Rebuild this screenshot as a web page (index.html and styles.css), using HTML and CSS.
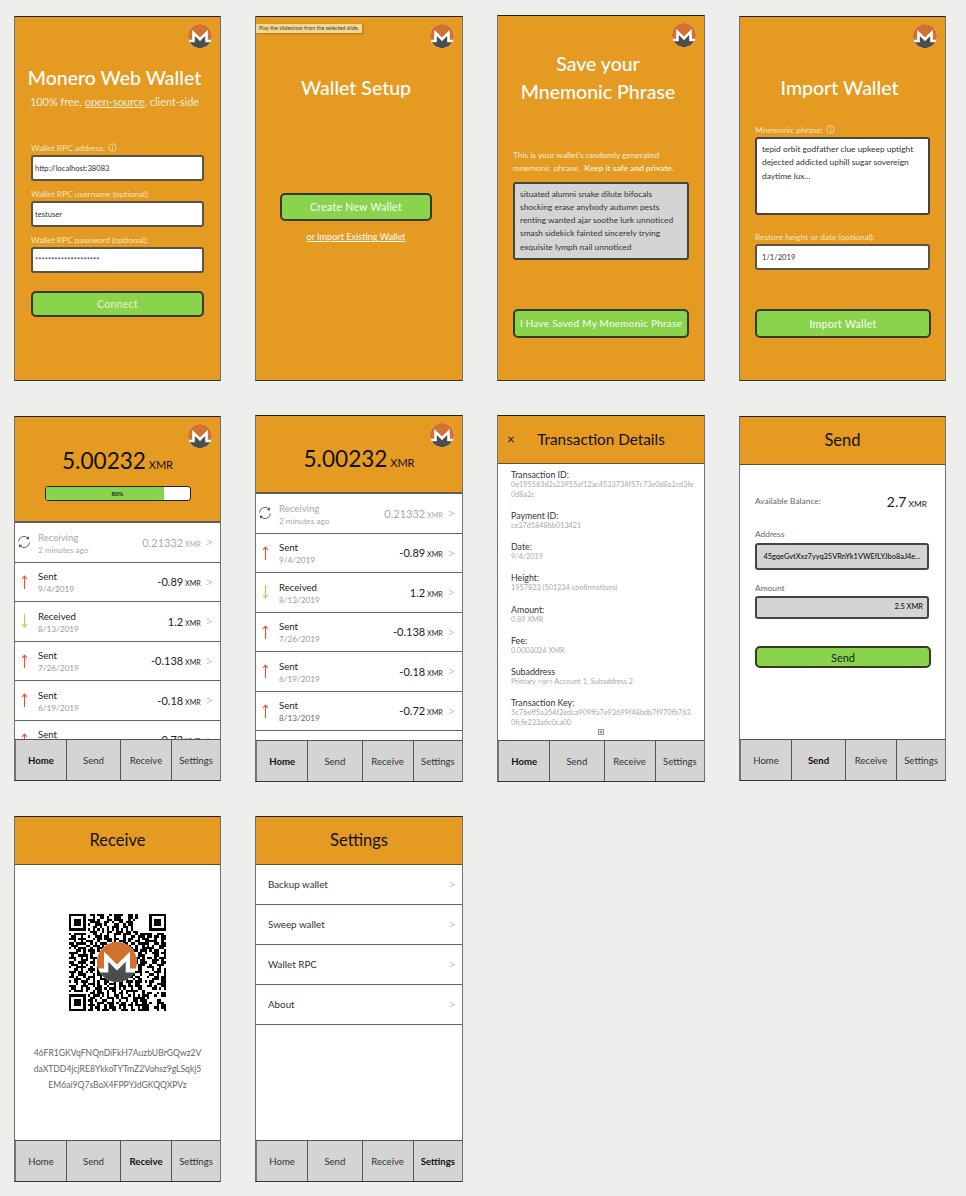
FILE: index.html
```html
<!DOCTYPE html>
<html lang="en">
<head>
  <meta charset="UTF-8">
  <title>Monero Web Wallet</title>
  <link rel="stylesheet" href="styles.css">
</head>
<body>
  <svg class="defs">
    <symbol id="logo" viewBox="0 0 24 24">
      <circle cx="12" cy="12" r="12" fill="#fff"/>
      <path fill="#d2702d" d="M12 0C5.365 0 0 5.373 0 12.015c0 1.335.228 2.607.618 3.81h3.577V5.729L12 13.545l7.805-7.815v10.095h3.577c.39-1.203.618-2.475.618-3.81C24 5.375 18.635 0 12 0z"/>
      <path fill="#4d4d4d" d="M10.212 15.307l-3.417-3.421v6.351H1.758C3.87 21.689 7.678 24 12 24s8.162-2.311 10.245-5.764h-5.04v-6.351l-3.386 3.421L12 17.135z"/>
    </symbol>
    <symbol id="up" viewBox="0 0 7 14">
      <path fill="none" stroke="#e8502f" stroke-width="1.1" d="M3.5 14V1M1.2 3.8L3.5 1L5.8 3.8"/>
    </symbol>
    <symbol id="down" viewBox="0 0 7 14">
      <path fill="none" stroke="#8fe04c" stroke-width="1.1" d="M3.5 0V13M1.2 10.2L3.5 13L5.8 10.2"/>
    </symbol>
    <symbol id="sync" viewBox="0 0 14 14">
      <path fill="none" stroke="#555" stroke-width=".9" d="M1.5 6.5A5.6 5.6 0 0 1 11 3M12.5 7.5A5.6 5.6 0 0 1 3 11"/>
      <path fill="#555" d="M11.9 1.2L12 4.4L8.9 3.9zM2.1 12.8L2 9.6L5.1 10.1z"/>
    </symbol>
    <symbol id="info" viewBox="0 0 10 10">
      <circle cx="5" cy="5" r="4.2" fill="none" stroke="currentColor" stroke-width=".8"/>
      <path fill="none" stroke="currentColor" stroke-width=".9" d="M5 4.2V7.6M5 2.4V3.3"/>
    </symbol>
  </svg>

  <div class="board">

    <!-- connect -->
    <section class="screen orange">
      <svg class="logo"><use href="#logo"/></svg>
      <h1 class="title connect-title">Monero Web Wallet</h1>
      <p class="subtitle">100% free, <u>open-source</u>, client-side</p>
      <div class="form connect-form">
        <label class="label">Wallet RPC address: <svg class="info"><use href="#info"/></svg></label>
        <div class="field">http://localhost:38083</div>
        <label class="label">Wallet RPC username (optional):</label>
        <div class="field">testuser</div>
        <label class="label">Wallet RPC password (optional):</label>
        <div class="field">********************</div>
        <button class="btn connect-btn">Connect</button>
      </div>
    </section>

    <!-- setup -->
    <section class="screen orange">
      <div class="tooltip">Play the slideshow from the selected slide.</div>
      <svg class="logo"><use href="#logo"/></svg>
      <h1 class="title setup-title">Wallet Setup</h1>
      <button class="btn create-btn">Create New Wallet</button>
      <a class="import-link">or Import Existing Wallet</a>
    </section>

    <!-- save mnemonic -->
    <section class="screen orange nudge">
      <svg class="logo"><use href="#logo"/></svg>
      <h1 class="title save-title">Save your<br>Mnemonic Phrase</h1>
      <div class="form save-form">
        <p class="note">This is your wallet's randomly generated<br>mnemonic phrase. &nbsp;<b>Keep it safe and private.</b></p>
        <div class="phrase phrase-gray">situated alumni snake dilute bifocals<br>shocking erase anybody autumn pests<br>renting wanted ajar soothe lurk unnoticed<br>smash sidekick fainted sincerely trying<br>exquisite lymph nail unnoticed</div>
        <button class="btn saved-btn">I Have Saved My Mnemonic Phrase</button>
      </div>
    </section>

    <!-- import -->
    <section class="screen orange">
      <svg class="logo"><use href="#logo"/></svg>
      <h1 class="title setup-title">Import Wallet</h1>
      <div class="form import-form">
        <label class="label">Mnemonic phrase: <svg class="info"><use href="#info"/></svg></label>
        <div class="phrase phrase-white">tepid orbit godfather clue upkeep uptight<br>dejected addicted uphill sugar sovereign<br>daytime lux...</div>
        <label class="label restore-label">Restore height or date (optional):</label>
        <div class="field">1/1/2019</div>
        <button class="btn import-btn">Import Wallet</button>
      </div>
    </section>

    <!-- home, syncing -->
    <section class="screen">
      <header class="head head-sync">
        <svg class="logo"><use href="#logo"/></svg>
        <div class="balance">5.00232<span class="unit"> XMR</span></div>
        <div class="progress"><div class="progress-fill"></div><span class="progress-text">80%</span></div>
      </header>
      <div class="txs">
        <div class="tx tx-pending"><svg class="tx-icon sync"><use href="#sync"/></svg><div class="tx-main"><div class="tx-name">Receiving</div><div class="tx-date">2 minutes ago</div></div><div class="tx-amount">0.21332<span class="tx-unit"> XMR</span></div><span class="chev">&gt;</span></div>
        <div class="tx"><svg class="tx-icon"><use href="#up"/></svg><div class="tx-main"><div class="tx-name">Sent</div><div class="tx-date">9/4/2019</div></div><div class="tx-amount">-0.89<span class="tx-unit"> XMR</span></div><span class="chev">&gt;</span></div>
        <div class="tx"><svg class="tx-icon"><use href="#down"/></svg><div class="tx-main"><div class="tx-name">Received</div><div class="tx-date">8/13/2019</div></div><div class="tx-amount">1.2<span class="tx-unit"> XMR</span></div><span class="chev">&gt;</span></div>
        <div class="tx"><svg class="tx-icon"><use href="#up"/></svg><div class="tx-main"><div class="tx-name">Sent</div><div class="tx-date">7/26/2019</div></div><div class="tx-amount">-0.138<span class="tx-unit"> XMR</span></div><span class="chev">&gt;</span></div>
        <div class="tx"><svg class="tx-icon"><use href="#up"/></svg><div class="tx-main"><div class="tx-name">Sent</div><div class="tx-date">6/19/2019</div></div><div class="tx-amount">-0.18<span class="tx-unit"> XMR</span></div><span class="chev">&gt;</span></div>
        <div class="tx"><svg class="tx-icon"><use href="#up"/></svg><div class="tx-main"><div class="tx-name">Sent</div><div class="tx-date">8/13/2019</div></div><div class="tx-amount">-0.72<span class="tx-unit"> XMR</span></div><span class="chev">&gt;</span></div>
      </div>
      <nav class="tabs"><a class="tab tab-on">Home</a><a class="tab">Send</a><a class="tab">Receive</a><a class="tab">Settings</a></nav>
    </section>

    <!-- home, synced -->
    <section class="screen nudge nudge-both">
      <header class="head head-home">
        <svg class="logo"><use href="#logo"/></svg>
        <div class="balance">5.00232<span class="unit"> XMR</span></div>
      </header>
      <div class="txs">
        <div class="tx tx-pending"><svg class="tx-icon sync"><use href="#sync"/></svg><div class="tx-main"><div class="tx-name">Receiving</div><div class="tx-date">2 minutes ago</div></div><div class="tx-amount">0.21332<span class="tx-unit"> XMR</span></div><span class="chev">&gt;</span></div>
        <div class="tx"><svg class="tx-icon"><use href="#up"/></svg><div class="tx-main"><div class="tx-name">Sent</div><div class="tx-date">9/4/2019</div></div><div class="tx-amount">-0.89<span class="tx-unit"> XMR</span></div><span class="chev">&gt;</span></div>
        <div class="tx"><svg class="tx-icon"><use href="#down"/></svg><div class="tx-main"><div class="tx-name">Received</div><div class="tx-date">8/13/2019</div></div><div class="tx-amount">1.2<span class="tx-unit"> XMR</span></div><span class="chev">&gt;</span></div>
        <div class="tx"><svg class="tx-icon"><use href="#up"/></svg><div class="tx-main"><div class="tx-name">Sent</div><div class="tx-date">7/26/2019</div></div><div class="tx-amount">-0.138<span class="tx-unit"> XMR</span></div><span class="chev">&gt;</span></div>
        <div class="tx"><svg class="tx-icon"><use href="#up"/></svg><div class="tx-main"><div class="tx-name">Sent</div><div class="tx-date">6/19/2019</div></div><div class="tx-amount">-0.18<span class="tx-unit"> XMR</span></div><span class="chev">&gt;</span></div>
        <div class="tx"><svg class="tx-icon"><use href="#up"/></svg><div class="tx-main"><div class="tx-name">Sent</div><div class="tx-date tx-date-dark">8/13/2019</div></div><div class="tx-amount">-0.72<span class="tx-unit"> XMR</span></div><span class="chev">&gt;</span></div>
      </div>
      <nav class="tabs"><a class="tab tab-on">Home</a><a class="tab">Send</a><a class="tab">Receive</a><a class="tab">Settings</a></nav>
    </section>

    <!-- transaction details -->
    <section class="screen nudge nudge-both">
      <header class="head head-title head-details"><span class="close">×</span>Transaction Details</header>
      <div class="details">
        <div class="detail"><div class="detail-key">Transaction ID:</div><div class="detail-val">0e195563d2s23955af12ac4533734f57c73e0d8a2cd3fe<br>0d8a2c</div></div>
        <div class="detail"><div class="detail-key">Payment ID:</div><div class="detail-val">ce37d1848bb013421</div></div>
        <div class="detail"><div class="detail-key">Date:</div><div class="detail-val">9/4/2019</div></div>
        <div class="detail"><div class="detail-key">Height:</div><div class="detail-val">1957823 (501234 confirmations)</div></div>
        <div class="detail"><div class="detail-key">Amount:</div><div class="detail-val">0.89 XMR</div></div>
        <div class="detail"><div class="detail-key">Fee:</div><div class="detail-val">0.0003024 XMR</div></div>
        <div class="detail"><div class="detail-key">Subaddress</div><div class="detail-val">Primary &lt;or&gt; Account 1, Subaddress 2</div></div>
        <div class="detail"><div class="detail-key">Transaction Key:</div><div class="detail-val">5c76eff5a354f2edca909ffa7e93699f48bdb7f970fb763<br>0fcfe233a6c0ca00</div></div>
        <svg class="expand" viewBox="0 0 6 6"><path fill="none" stroke="#555" stroke-width=".7" d="M.4.4h5.2v5.2H.4zM3 1.4v3.2M1.4 3h3.2"/></svg>
      </div>
      <nav class="tabs"><a class="tab tab-on">Home</a><a class="tab">Send</a><a class="tab">Receive</a><a class="tab">Settings</a></nav>
    </section>

    <!-- send -->
    <section class="screen">
      <header class="head head-title">Send</header>
      <div class="send">
        <div class="avail"><span class="avail-label">Available Balance:</span><span class="avail-num">2.7<span class="avail-unit"> XMR</span></span></div>
        <label class="send-label">Address</label>
        <div class="send-field send-address">45gqeGvtXxz7yyq35VRnYk1VWEfLYJbo8aJ4e...</div>
        <label class="send-label send-label-amount">Amount</label>
        <div class="send-field send-amount">2.5 XMR</div>
        <button class="btn send-btn">Send</button>
      </div>
      <nav class="tabs"><a class="tab">Home</a><a class="tab tab-on">Send</a><a class="tab">Receive</a><a class="tab">Settings</a></nav>
    </section>

    <!-- receive -->
    <section class="screen">
      <header class="head head-title">Receive</header>
      <div class="receive">
        <div class="qr">
          <svg class="qr-code" viewBox="0 0 41 41" shape-rendering="crispEdges"><path fill="none" stroke="#000" d="M0 .5h7m2 0h2m1 0h3m2 0h1m1 0h4m2 0h2m1 0h1M34 .5h7M0 1.5h1m5 0h1m3 0h1m2 0h2m1 0h1m2 0h3m3 0h2m1 0h1M34 1.5h1m5 0h1M0 2.5h1m1 0h3m1 0h1m1 0h3m1 0h1m3 0h2m1 0h4m2 0h1m1 0h1M34 2.5h1m1 0h3m1 0h1M0 3.5h1m1 0h3m1 0h1m2 0h4m2 0h2m1 0h1m2 0h2m1 0h3M34 3.5h1m1 0h3m1 0h1M0 4.5h1m1 0h3m1 0h1m1 0h1m2 0h3m1 0h1m3 0h2m2 0h1m1 0h2M34 4.5h1m1 0h3m1 0h1M0 5.5h1m5 0h1m3 0h2m1 0h1m2 0h1m1 0h3m2 0h2m1 0h1M34 5.5h1m5 0h1M0 6.5h7m1 0h1m1 0h1m1 0h1m1 0h1m1 0h1m1 0h1m1 0h1m1 0h1m1 0h1m1 0h1M34 6.5h7M9 7.5h3m2 0h1m1 0h2m2 0h3m1 0h2m1 0h2M0 8.5h1m1 0h5m3 0h2m1 0h1m2 0h1m2 0h3m1 0h3m2 0h1m1 0h5M1 9.5h2m2 0h1m2 0h1m2 0h3m1 0h2m2 0h1m3 0h1m2 0h2m1 0h3m1 0h2M0 10.5h3m1 0h3m3 0h1m1 0h2m1 0h3m1 0h2m2 0h1m1 0h2m2 0h1m1 0h3M2 11.5h1m2 0h1m1 0h3m2 0h1m3 0h2m1 0h1m1 0h3m1 0h1m2 0h2m2 0h2M0 12.5h2m1 0h4m2 0h1m1 0h1m1 0h3m2 0h1m2 0h1m1 0h2m1 0h2m1 0h3M1 13.5h3m3 0h2m1 0h3m1 0h1m2 0h2m1 0h3m2 0h1m2 0h1m2 0h1m1 0h1M0 14.5h1m1 0h1m1 0h3m2 0h1m2 0h3m1 0h1m1 0h2m2 0h1m1 0h3m1 0h1m2 0h2M3 15.5h2m1 0h1m1 0h3m1 0h1m3 0h1m2 0h3m1 0h1m3 0h2m1 0h3M0 16.5h4m2 0h1m2 0h2m2 0h2m1 0h1m3 0h2m1 0h1m1 0h2m2 0h2m1 0h1M1 17.5h1m2 0h4m1 0h1m3 0h1m2 0h3m1 0h1m2 0h3m1 0h1m1 0h3M0 18.5h3m2 0h1m1 0h1m1 0h3m1 0h1m2 0h2m2 0h1m1 0h2m2 0h1m1 0h2m1 0h1M2 19.5h1m2 0h3m2 0h1m1 0h3m1 0h1m3 0h1m2 0h3m1 0h2m1 0h2M0 20.5h2m2 0h3m2 0h2m2 0h2m1 0h1m1 0h2m2 0h1m1 0h1m2 0h2m1 0h2M1 21.5h3m1 0h1m1 0h1m2 0h1m1 0h3m2 0h3m1 0h1m2 0h2m1 0h1m1 0h3M0 22.5h1m2 0h4m2 0h1m2 0h1m1 0h2m2 0h1m1 0h3m1 0h1m2 0h1m1 0h2M2 23.5h2m1 0h1m2 0h3m1 0h1m2 0h1m1 0h2m2 0h1m2 0h3m2 0h2M0 24.5h3m1 0h2m1 0h1m1 0h1m2 0h3m1 0h1m3 0h2m1 0h1m1 0h2m1 0h3M1 25.5h1m2 0h3m3 0h1m1 0h2m2 0h1m1 0h3m2 0h1m1 0h3m2 0h1M0 26.5h2m1 0h1m2 0h1m1 0h3m2 0h1m2 0h2m1 0h1m2 0h2m1 0h2m1 0h2M2 27.5h3m2 0h2m1 0h1m2 0h3m1 0h1m2 0h1m1 0h3m2 0h1m1 0h2M0 28.5h1m1 0h2m1 0h3m2 0h1m1 0h1m2 0h2m2 0h1m1 0h2m1 0h3m1 0h3M3 29.5h1m2 0h1m1 0h3m1 0h1m2 0h1m1 0h3m1 0h2m2 0h1m2 0h2M0 30.5h3m2 0h3m2 0h1m1 0h2m2 0h1m2 0h1m1 0h3m1 0h2m1 0h3M1 31.5h2m2 0h1m1 0h2m2 0h3m1 0h1m1 0h3m1 0h1m1 0h1m2 0h1m2 0h2M0 32.5h1m1 0h4m1 0h1m2 0h1m1 0h2m2 0h1m1 0h2m2 0h1m1 0h5m2 0h1M9 33.5h2m1 0h3m1 0h1m2 0h1m1 0h2m1 0h1m2 0h1m3 0h1m1 0h2M0 34.5h7m1 0h1m1 0h3m1 0h1m1 0h1m2 0h2m1 0h1m2 0h1m1 0h1m1 0h1m1 0h3M0 35.5h1m5 0h1m2 0h2m2 0h1m2 0h3m1 0h1m1 0h3m2 0h5m1 0h1M0 36.5h1m1 0h3m1 0h1m1 0h2m1 0h1m2 0h2m2 0h1m2 0h1m2 0h1m2 0h2m1 0h3M0 37.5h1m1 0h3m1 0h1m2 0h1m2 0h3m1 0h3m1 0h1m1 0h2m2 0h1m1 0h1M0 38.5h1m1 0h3m1 0h1m1 0h3m1 0h1m2 0h1m1 0h2m2 0h3m1 0h2m1 0h1m1 0h2M0 39.5h1m5 0h1m2 0h1m1 0h2m2 0h1m1 0h3m1 0h1m1 0h1m2 0h1m2 0h1m1 0h1M0 40.5h7m1 0h2m2 0h1m1 0h3m1 0h2m2 0h3m1 0h2m1 0h1m2 0h1M33 8.5h2m2 0h3M36 9.5h2m1 0h2M33 10.5h1m2 0h1m2 0h2M34 11.5h3m2 0h1M32 12.5h2m2 0h2m1 0h2M35 13.5h1m2 0h3M33 14.5h3m2 0h2M34 15.5h1m1 0h2m2 0h1M32 16.5h1m2 0h3m1 0h2M36 17.5h2m2 0h1M33 18.5h2m1 0h1m1 0h3M35 19.5h3m1 0h1M32 20.5h1m2 0h2m2 0h2M34 21.5h1m2 0h3M33 22.5h3m2 0h1M35 23.5h1m1 0h2m1 0h1M32 24.5h2m2 0h3m1 0h1M34 25.5h2m1 0h1m2 0h1M33 26.5h1m2 0h2m1 0h2M35 27.5h3m1 0h2M32 28.5h1m1 0h2m3 0h2M34 29.5h1m2 0h4M33 30.5h2m1 0h1m2 0h2M35 31.5h2m1 0h1m1 0h1M33 33.5h2m2 0h1m1 0h2M29 34.5h1m2 0h1m3 0h1m2 0h2M30 36.5h1m6 0h2M31 37.5h2m1 0h1m2 0h3m1 0h1M29 38.5h1m2 0h2m3 0h1m1 0h2M31 39.5h3m2 0h2m1 0h2M30 40.5h2m1 0h1m3 0h1m2 0h1"/></svg>
          <svg class="qr-logo"><use href="#logo"/></svg>
        </div>
        <p class="address">46FR1GKVqFNQnDiFkH7AuzbUBrGQwz2V<br>daXTDD4jcjRE8YkkoTYTmZ2Vohsz9gLSqkj5<br>EM6ai9Q7sBoX4FPPYJdGKQQXPVz</p>
      </div>
      <nav class="tabs"><a class="tab">Home</a><a class="tab">Send</a><a class="tab tab-on">Receive</a><a class="tab">Settings</a></nav>
    </section>

    <!-- settings -->
    <section class="screen">
      <header class="head head-title">Settings</header>
      <div class="menu">
        <div class="menu-item">Backup wallet<span class="chev">&gt;</span></div>
        <div class="menu-item">Sweep wallet<span class="chev">&gt;</span></div>
        <div class="menu-item">Wallet RPC<span class="chev">&gt;</span></div>
        <div class="menu-item">About<span class="chev">&gt;</span></div>
      </div>
      <nav class="tabs"><a class="tab">Home</a><a class="tab">Send</a><a class="tab">Receive</a><a class="tab tab-on">Settings</a></nav>
    </section>

  </div>
</body>
</html>
```

FILE: styles.css
```css
* {
  box-sizing: border-box;
}

body {
  margin: 0;
  background-color: #eeeeec;
  font-family: Lato, 'Noto Sans', sans-serif;
  color: #222;
}

.defs {
  display: none;
}

.board {
  display: grid;
  grid-template-columns: 207px 208px 208px 207px;
  grid-template-rows: 365px 365px 366px;
  column-gap: 34px;
  row-gap: 35px;
  padding: 16px 0 14px 14px;
}

/* phone */
.screen {
  position: relative;
  display: flex;
  flex-direction: column;
  background-color: #fff;
  border: 1px solid #6d7278;
  border-top-color: #222;
  border-bottom-color: #333;
  overflow: hidden;
}

.nudge {
  margin-top: -1px;
}

.nudge-both {
  margin-bottom: -1px;
}

.orange {
  background-color: #e59a22;
  color: #fff;
}

.logo {
  position: absolute;
  top: 7px;
  right: 8.5px;
  width: 24px;
  height: 24px;
}

.tooltip {
  position: absolute;
  top: 7px;
  left: 0;
  padding: 1px 3px;
  background-color: #f3d88f;
  box-shadow: 1px 1px 2px rgba(0, 0, 0, 0.25);
  color: #444;
  font-size: 5.4px;
  line-height: 7px;
}

/* onboarding text */
.title {
  margin: 0;
  padding-right: 6px;
  font-size: 19.5px;
  font-weight: 500;
  text-align: center;
}

.connect-title {
  margin-top: 48px;
  line-height: 26px;
}

.subtitle {
  margin: 2px 0 0;
  padding-right: 6px;
  font-size: 10.9px;
  line-height: 17px;
  text-align: center;
  color: #fbeeda;
}

.setup-title {
  margin-top: 57px;
  line-height: 28px;
}

.save-title {
  margin-top: 34px;
  line-height: 28px;
}

.form {
  display: flex;
  flex-direction: column;
  padding: 0 16px;
}

.connect-form {
  margin-top: 31px;
}

.label {
  display: flex;
  align-items: center;
  gap: 3px;
  height: 13px;
  margin-bottom: 1px;
  font-size: 8.4px;
  color: #f9e6c4;
}

.info {
  width: 9px;
  height: 9px;
}

.field {
  height: 26px;
  margin-bottom: 6px;
  padding-left: 2px;
  background-color: #fff;
  border: 2px solid #5a5346;
  border-radius: 3px;
  color: #333;
  font-size: 7.6px;
  line-height: 22px;
}

.btn {
  display: block;
  background-color: #89d44c;
  border: 2px solid #333c1e;
  border-radius: 5px;
  color: #fff;
  font-family: inherit;
  font-size: 10.5px;
  letter-spacing: 0.3px;
  padding: 0;
}

.connect-btn {
  height: 26px;
  margin-top: 12px;
  color: #f5f0d0;
}

.create-btn {
  width: 152px;
  height: 28px;
  margin: 91px 0 0 24px;
}

.import-link {
  margin-top: 10px;
  padding-right: 6px;
  font-size: 9.1px;
  line-height: 12px;
  text-align: center;
  text-decoration: underline;
}

.save-form {
  margin-top: 43px;
  padding: 0 15px;
}

.note {
  margin: 0 0 6px;
  font-size: 8.4px;
  line-height: 13.3px;
  color: #fbeeda;
  white-space: nowrap;
}

.phrase {
  border: 2px solid #444;
  border-radius: 3px;
  color: #333;
  font-size: 8.4px;
  line-height: 13.3px;
  padding: 4px 5px;
  white-space: nowrap;
}

.phrase-gray {
  height: 78px;
  background-color: #d4d4d4;
}

.phrase-white {
  height: 78px;
  background-color: #fff;
}

.saved-btn {
  width: 176px;
  height: 29px;
  margin-top: 49px;
  font-size: 9.9px;
}

.import-form {
  margin-top: 21px;
  padding: 0 15px;
}

.import-form .field {
  margin-bottom: 0;
  padding-left: 5px;
}

.restore-label {
  margin-top: 15px;
}

.import-btn {
  width: 176px;
  height: 29px;
  margin-top: 39px;
}

/* header bars */
.head {
  position: relative;
  flex: none;
  background-color: #e59a22;
  border-bottom: 2px solid #5d5d5d;
  text-align: center;
  color: #111;
}

.head-sync {
  height: 106px;
  padding-top: 27px;
}

.head-home {
  height: 78px;
  padding-top: 26px;
}

.balance {
  font-size: 22.6px;
  line-height: 34px;
  color: #111;
}

.unit {
  font-size: 11px;
}

.progress {
  position: relative;
  width: 146px;
  height: 15px;
  margin: 4px auto 0;
  background-color: #fff;
  border: 1px solid #222;
  border-radius: 3px;
  overflow: hidden;
}

.progress-fill {
  width: 82%;
  height: 100%;
  background-color: #89d44c;
}

.progress-text {
  position: absolute;
  inset: 0;
  font-size: 6px;
  font-weight: 700;
  line-height: 13px;
  text-align: center;
  color: #222;
}

.head-title {
  height: 48px;
  border-bottom: 1.5px solid #5d5030;
  font-size: 16.5px;
  line-height: 47px;
}

.head-details {
  font-size: 15.3px;
}

.close {
  position: absolute;
  left: 9px;
  top: 0;
  font-size: 13px;
}

/* transactions */
.txs {
  flex: 1;
  min-height: 0;
  overflow: hidden;
}

.tx {
  display: flex;
  align-items: center;
  height: 39.5px;
  padding-right: 7px;
  border-bottom: 1.5px solid #666;
}

.tx-icon {
  flex: none;
  width: 7px;
  height: 14px;
  margin: 0 10px 0 6px;
}

.tx-icon.sync {
  width: 14px;
  height: 14px;
  margin: 0 7px 0 2px;
}

.tx-main {
  flex: 1;
  padding-top: 3px;
}

.tx-name {
  font-size: 9.6px;
  line-height: 13px;
  color: #222;
}

.tx-date {
  font-size: 8.2px;
  line-height: 13px;
  color: #999;
}

.tx-date-dark {
  color: #666;
}

.tx-amount {
  font-size: 11px;
  color: #222;
}

.tx-unit {
  font-size: 7.2px;
}

.chev {
  margin-left: 4px;
  color: #aaa;
  font-size: 14px;
  font-weight: 300;
  line-height: 14px;
}

.tx-pending .tx-name,
.tx-pending .tx-amount,
.tx-pending .tx-date {
  color: #aaa;
}

/* tab bar */
.tabs {
  flex: none;
  display: grid;
  grid-template-columns: 51fr 54fr 51fr 49fr;
  height: 41px;
  background-color: #d4d4d4;
  border-top: 1.5px solid #555;
}

.tab {
  display: flex;
  align-items: center;
  justify-content: center;
  border-left: 1.5px solid #555;
  font-size: 9.6px;
  color: #333;
}

.tab:first-child {
  border-left: 1px solid #777;
}

.tab-on {
  font-weight: 700;
  color: #111;
}

/* details */
.details {
  position: relative;
  flex: 1;
  padding: 5px 10px 0 13px;
}

.detail {
  margin-bottom: 10.5px;
}

.detail-key {
  font-size: 8.8px;
  line-height: 11px;
  color: #333;
}

.detail-val {
  font-size: 7.3px;
  line-height: 9.7px;
  color: #aaa;
  white-space: nowrap;
}

.expand {
  position: absolute;
  left: 100px;
  bottom: 5px;
  width: 6px;
  height: 6px;
}

/* send */
.send {
  flex: 1;
  padding: 26px 16px 0 15px;
}

.avail {
  display: flex;
  justify-content: space-between;
  align-items: center;
  height: 20px;
  padding-right: 2px;
}

.avail-label {
  font-size: 8.4px;
  color: #666;
}

.avail-num {
  font-size: 14px;
  color: #222;
}

.avail-unit {
  font-size: 8.4px;
}

.send-label {
  display: block;
  margin-top: 16px;
  font-size: 8.4px;
  line-height: 14px;
  color: #666;
}

.send-label-amount {
  margin-top: 11px;
}

.send-field {
  margin-top: 2px;
  background-color: #d4d4d4;
  border: 2px solid #444;
  border-radius: 3px;
  color: #111;
  font-size: 7.4px;
  font-weight: 500;
}

.send-address {
  height: 27px;
  line-height: 23px;
  text-align: center;
  white-space: nowrap;
  overflow: hidden;
}

.send-label-amount + .send-field {
  margin-top: 1px;
}

.send-amount {
  height: 23px;
  padding-right: 4px;
  line-height: 17px;
  text-align: right;
}

.send-btn {
  width: 176px;
  height: 22px;
  margin-top: 27px;
  color: #222;
  font-size: 11px;
  letter-spacing: 0;
}

/* receive */
.receive {
  flex: 1;
  display: flex;
  flex-direction: column;
  align-items: center;
  padding-top: 49px;
}

.qr {
  position: relative;
  width: 97px;
  height: 97px;
}

.qr-code {
  display: block;
  width: 97px;
  height: 97px;
}

.qr-logo {
  position: absolute;
  top: 28px;
  left: 28px;
  width: 40px;
  height: 40px;
}

.address {
  margin: 34px 0 0;
  font-size: 8.6px;
  line-height: 16px;
  text-align: center;
  color: #666;
  white-space: nowrap;
}

/* settings */
.menu {
  flex: 1;
}

.menu-item {
  display: flex;
  justify-content: space-between;
  align-items: center;
  height: 40px;
  padding: 0 6px 2px 12px;
  border-bottom: 1.5px solid #666;
  font-size: 9.8px;
  color: #333;
}
```
